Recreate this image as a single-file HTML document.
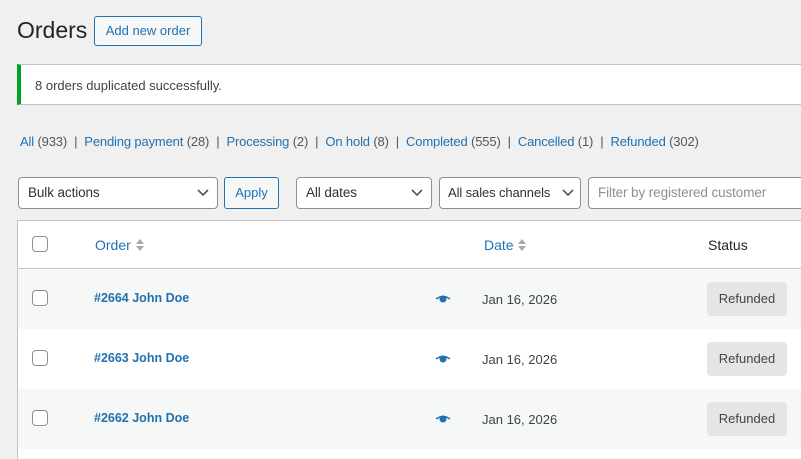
<!DOCTYPE html>
<html><head><meta charset="utf-8"><style>
*{box-sizing:border-box;margin:0;padding:0}
html,body{width:801px;height:459px;overflow:hidden}
body{background:#f0f0f1;font-family:"Liberation Sans",sans-serif;font-size:13px;color:#3c434a;position:relative}
.a{position:absolute;white-space:nowrap}
a{color:#2271b1;text-decoration:none}
.sel{position:absolute;height:32px;border:1px solid #8c8f94;border-radius:4px;background:#fff;color:#2c3338;font-size:13.5px;line-height:30px;padding-left:9px;letter-spacing:-0.1px}
.sel svg{position:absolute;right:8px;top:11px}
.row{position:absolute;left:17px;width:800px;height:60px;border-left:1px solid #c3c4c7}
.cb{position:absolute;width:16px;height:16px;border:1px solid #8c8f94;border-radius:4px;background:#fff}
.badge{position:absolute;left:707px;width:80px;height:34px;background:#e5e5e5;border-radius:4px;color:#454545;font-size:13px;line-height:34px;text-align:center}
.on{font-weight:bold;font-size:12.5px}
.sep{margin:0 7px}
</style></head><body>
<div class="a" style="left:17px;top:17px;font-size:23px;color:#1d2327;">Orders</div>
<div class="a" style="left:94px;top:16px;width:108px;height:30px;border:1px solid #2271b1;border-radius:3px;background:#f6f7f7;color:#2271b1;line-height:28px;text-align:center;font-size:13px">Add new order</div>
<div class="a" style="left:17px;top:64px;width:790px;height:41px;background:#fff;border:1px solid #c3c4c7;border-left:4px solid #00a32a;"></div>
<div class="a" style="left:35px;top:78px;font-size:13px;color:#3c434a">8 orders duplicated successfully.</div>
<div class="a" style="left:20px;top:134px;font-size:13px;color:#50575e;letter-spacing:-0.15px"><a>All</a> (933)<span class="sep">|</span><a>Pending payment</a> (28)<span class="sep">|</span><a>Processing</a> (2)<span class="sep">|</span><a>On hold</a> (8)<span class="sep">|</span><a>Completed</a> (555)<span class="sep">|</span><a>Cancelled</a> (1)<span class="sep">|</span><a>Refunded</a> (302)</div>
<div class="sel" style="left:18px;top:177px;width:200px">Bulk actions<svg width="12" height="8"><path d="M1 1l5 5 5-5" stroke="#50575e" stroke-width="1.6" fill="none"/></svg></div>
<div class="a" style="left:224px;top:177px;width:55px;height:32px;border:1px solid #2271b1;border-radius:3px;background:#f6f7f7;color:#2271b1;line-height:30px;text-align:center;font-size:13px">Apply</div>
<div class="sel" style="left:296px;top:177px;width:136px">All dates<svg width="12" height="8"><path d="M1 1l5 5 5-5" stroke="#50575e" stroke-width="1.6" fill="none"/></svg></div>
<div class="sel" style="left:439px;top:177px;width:142px;font-size:13px;padding-left:8px">All sales channels<svg width="12" height="8" style="right:6px"><path d="M1 1l5 5 5-5" stroke="#50575e" stroke-width="1.6" fill="none"/></svg></div>
<div class="sel" style="left:588px;top:177px;width:230px;color:#8c8f94">Filter by registered customer</div>
<div class="a" style="left:17px;top:220px;width:800px;height:49px;background:#fff;border:1px solid #c3c4c7;border-right:none"></div>
<div class="cb" style="left:32px;top:236px"></div>
<div class="a" style="left:95px;top:237px;font-size:14px;color:#2271b1">Order <svg width="10" height="16" style="vertical-align:-3px"><path d="M1 7l4-5 4 5zM1 9l4 5 4-5z" fill="#a7aaad"/></svg></div>
<div class="a" style="left:484px;top:237px;font-size:14px;color:#2271b1">Date <svg width="10" height="16" style="vertical-align:-3px"><path d="M1 7l4-5 4 5zM1 9l4 5 4-5z" fill="#a7aaad"/></svg></div>
<div class="a" style="left:708px;top:237px;font-size:14px;color:#1d2327">Status</div>

<div class="row" style="top:269px;background:#f6f7f7"></div>
<div class="row" style="top:329px;background:#fff"></div>
<div class="row" style="top:389px;background:#f6f7f7"></div>
<div class="row" style="top:449px;height:10px;background:#fff"></div>

<div class="cb" style="left:32px;top:290px"></div>
<div class="a on" style="left:94px;top:291px;color:#2271b1">#2664 John Doe</div>
<svg class="a" style="left:435px;top:295px" width="16" height="8"><path d="M1 4Q8-1 15 4" stroke="#2271b1" stroke-width="1.4" fill="none"/><circle cx="8" cy="4" r="3.5" fill="#2271b1"/></svg>
<div class="a" style="left:482px;top:292px">Jan 16, 2026</div>
<div class="badge" style="top:282px">Refunded</div>

<div class="cb" style="left:32px;top:350px"></div>
<div class="a on" style="left:94px;top:351px;color:#2271b1">#2663 John Doe</div>
<svg class="a" style="left:435px;top:355px" width="16" height="8"><path d="M1 4Q8-1 15 4" stroke="#2271b1" stroke-width="1.4" fill="none"/><circle cx="8" cy="4" r="3.5" fill="#2271b1"/></svg>
<div class="a" style="left:482px;top:352px">Jan 16, 2026</div>
<div class="badge" style="top:342px">Refunded</div>

<div class="cb" style="left:32px;top:410px"></div>
<div class="a on" style="left:94px;top:411px;color:#2271b1">#2662 John Doe</div>
<svg class="a" style="left:435px;top:415px" width="16" height="8"><path d="M1 4Q8-1 15 4" stroke="#2271b1" stroke-width="1.4" fill="none"/><circle cx="8" cy="4" r="3.5" fill="#2271b1"/></svg>
<div class="a" style="left:482px;top:412px">Jan 16, 2026</div>
<div class="badge" style="top:402px">Refunded</div>
</body></html>
